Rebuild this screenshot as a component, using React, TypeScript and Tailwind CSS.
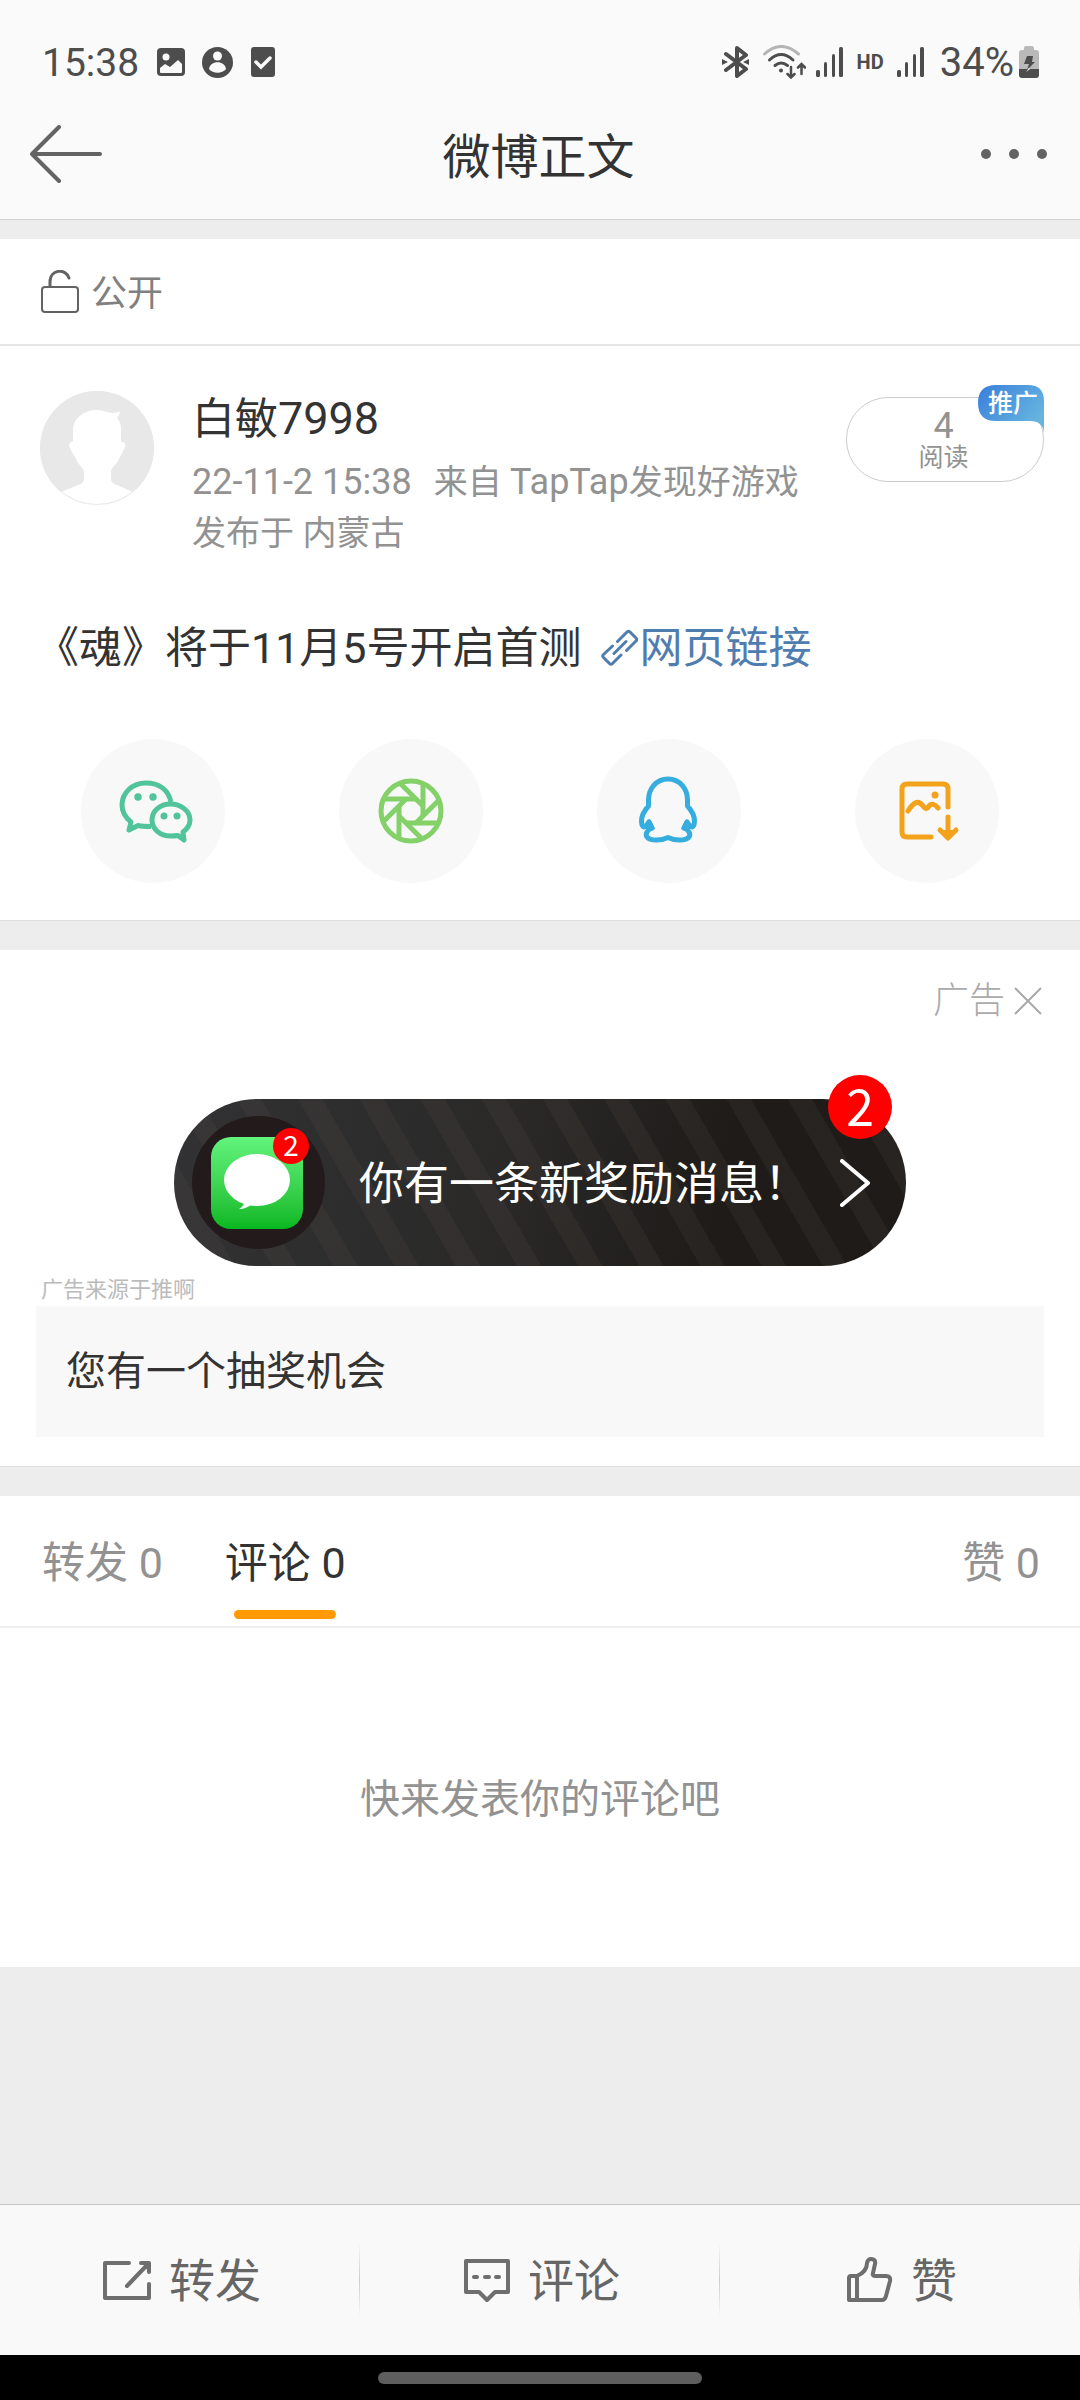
import type { ReactNode } from "react";

function StatusBar() {
  return (
    <div className="flex h-[90px] items-center justify-between pt-[34px] pr-[41px] pl-[42px] text-[40px] leading-[48px] text-[#4d4d4d]">
      <div className="flex items-center">
        <span className="mr-[18px] pt-[2px] text-[39px]">15:38</span>
        <svg width="28" height="28" viewBox="0 0 28 28" className="mr-[17px]">
          <rect width="28" height="28" rx="4" fill="#4d4d4d" />
          <circle cx="9" cy="9" r="3.5" fill="#fafafa" />
          <path d="M3 20l5-4 5 3 8-7 4 4v8q0 1-1 1H4q-1 0-1-1z" fill="#fafafa" />
        </svg>
        <svg width="31" height="31" viewBox="0 0 31 31" className="mr-[18px]">
          <circle cx="15.5" cy="15.5" r="15.5" fill="#4d4d4d" />
          <circle cx="15.5" cy="9" r="4.5" fill="#fafafa" />
          <path d="M7 22c1-9 16-9 17 0-4 5-13 5-17 0z" fill="#fafafa" />
        </svg>
        <svg width="24" height="30" viewBox="0 0 24 30">
          <rect width="24" height="30" rx="3" fill="#4d4d4d" />
          <path d="M5 15l5 5 9-9" fill="none" stroke="#fafafa" strokeWidth="3.5" strokeLinecap="round" />
        </svg>
      </div>
      <div className="flex items-center">
        <svg width="27" height="32" viewBox="0 0 27 32" fill="none" stroke="#4d4d4d" strokeWidth="4" className="mr-[14px]">
          <path d="M4 8l20 15-9 7V2l9 7L4 24" strokeLinejoin="round" strokeLinecap="round" />
          <path d="M0 13v6l6-3zM27 13v6l-6-3z" fill="#4d4d4d" stroke="none" />
        </svg>
        <svg width="43" height="34" viewBox="0 0 43 34" fill="none" stroke="#4d4d4d" strokeWidth="3" strokeLinecap="round" className="mr-[10px]">
          <path d="M1.5 9Q18-6 35.5 9" stroke="#b5b5b5" />
          <path d="M6.5 15Q18 4 30 15M12 20.5q6-5 12.5 0" />
          <circle cx="18" cy="25.5" r="2" fill="#4d4d4d" stroke="none" />
          <path d="M28 22v10M24.5 29l3.5 3.5 3.5-3.5M38.5 29V20M35 22.5l3.5-3.5 3.5 3.5" strokeWidth="2.5" />
        </svg>
        <Signal />
        <span className="mr-[13px] ml-[14px] text-[20px] leading-6 font-bold">HD</span>
        <Signal />
        <span className="mr-[5px] ml-[16px] pt-[2px]">34%</span>
        <svg width="20" height="32" viewBox="0 0 20 32">
          <path d="M5 4V2q0-2 2-2h6q2 0 2 2v2h2q3 0 3 3v18H0V7q0-3 3-3z" fill="#b9b9b9" />
          <path d="M0 23h20v6q0 3-3 3H3q-3 0-3-3z" fill="#4d4d4d" />
          <path d="M8 10h6l-1 6h3l-8 8 2-6H5z" fill="#4d4d4d" />
          <path d="M7 26l4-3-1-1z" fill="#fafafa" />
        </svg>
      </div>
    </div>
  );
}

function Signal() {
  return (
    <svg width="27" height="30" viewBox="0 0 27 30" fill="#4d4d4d">
      <rect x="0" y="23" width="4" height="7" rx="1.5" />
      <rect x="8" y="15" width="3" height="15" rx="1.5" />
      <rect x="16" y="7" width="3" height="23" rx="1.5" />
      <rect x="23" y="0" width="4" height="30" rx="1.5" />
    </svg>
  );
}

function NavBar() {
  return (
    <nav className="grid h-[129px] grid-cols-[1fr_auto_1fr] items-center pr-[33px] pb-[2px] pl-[30px]">
      <button aria-label="返回" className="justify-self-start">
        <svg width="72" height="58" viewBox="0 0 72 58" fill="none" stroke="#636363" strokeWidth="4" strokeLinecap="round" strokeLinejoin="round">
          <path d="M70 29H2M29 2L2 29l27 27" />
        </svg>
      </button>
      <h1 className="pt-[8px] text-[48px] leading-[60px] text-[#333]">微博正文</h1>
      <button aria-label="更多" className="flex gap-[18px] justify-self-end">
        <i className="size-[10px] rounded-full bg-[#636363]" />
        <i className="size-[10px] rounded-full bg-[#636363]" />
        <i className="size-[10px] rounded-full bg-[#636363]" />
      </button>
    </nav>
  );
}

function Avatar() {
  return (
    <svg width="114" height="114" viewBox="0 0 114 114" className="shrink-0">
      <circle cx="57" cy="57" r="57" fill="#e8e8e8" />
      <path
        d="M33 50V38C34 27 43 19 58 19c6 0 9 3 15 3l7-1c0 2-2 4-3 6 3 3 4 7 4 11v13c4 0 5 2 4 5-2 6-5 9-7 14-3 5-7 7-7 11v6c0 4 2 6 6 7l16 7a56 56 0 0 1-72 0l17-7c4-1 6-3 6-7v-6c0-3-4-6-7-11-3-6-6-10-8-15 0-3 1-4 4-5z"
        fill="#fff"
      />
      <circle cx="57" cy="57" r="56.5" fill="none" stroke="#e8e8e8" />
    </svg>
  );
}

function Post() {
  return (
    <article className="border-b border-[#dedede] bg-white pt-[45px] pb-[37px]">
      <div className="flex items-start pr-[36px] pl-[40px]">
        <Avatar />
        <div className="ml-[38px] min-w-0 flex-1">
          <h2 className="text-[43px] leading-[56px] text-[#333]">
            白敏<span className="text-[45px]">7998</span>
          </h2>
          <p className="mt-[10px] text-[34px] leading-[51px] text-[#929292]">
            <span className="text-[36px]">22-11-2 15:38</span>
            <span className="ml-[22px]">
              来自 <span className="text-[36px]">TapTap</span>发现好游戏
            </span>
            <br />
            发布于 内蒙古
          </p>
        </div>
        <div className="relative mt-[6px] flex h-[85px] w-[198px] shrink-0 flex-col items-center rounded-[42px] border border-[#ccc] pt-[10px] pr-[3px] text-[#929292]">
          <span className="text-[36px] leading-[36px]">4</span>
          <span className="text-[25px] leading-[28px]">阅读</span>
          <div className="absolute -top-[13px] -right-px h-[48px] w-[66px]">
            <svg width="66" height="48" viewBox="0 0 66 48" className="absolute inset-0">
              <defs>
                <linearGradient id="promo" x1="0" x2="1" y1="0" y2="0.6">
                  <stop offset="0" stopColor="#3a7edb" />
                  <stop offset="1" stopColor="#66b5df" />
                </linearGradient>
              </defs>
              <path d="M18 0h32q16 0 16 16v32q-1-12-14-12H18Q0 36 0 18T18 0z" fill="url(#promo)" />
            </svg>
            <span className="relative block pl-[10px] text-[25px] leading-[38px] font-medium whitespace-nowrap text-white">推广</span>
          </div>
        </div>
      </div>
      <p className="mt-[59px] px-[36px] text-[43px] leading-[60px] text-[#333]">
        《魂》将于11月5号开启首测
        <a href="#" className="ml-[19px] text-[#507daf]">
          <svg width="37" height="37" viewBox="0 0 37 37" fill="none" stroke="#507daf" strokeWidth="3" strokeLinecap="round" strokeLinejoin="round" className="mr-[2px] inline-block align-[-3px]">
            <path d="M16.5 12.5L26 3q1.5-1.5 3 0l6 6q1.5 1.5 0 3l-9.5 9.5M11.5 17L2.5 25.5q-1.5 1.5 0 3L8.5 34.5q1.5 1.5 3 0L20 26M13 24.5L25 12.5" />
          </svg>
          网页链接
        </a>
      </p>
      <div className="mt-[61px] grid grid-cols-4 px-[24px]">
        <Share label="微信">
          <svg width="74" height="63" viewBox="-3 0 74 63" fill="none" stroke="#52c49b" strokeWidth="5" strokeLinejoin="round" className="overflow-visible">
            <path d="M52 22C49 9 39 3 27 3 13 3 3 13 3 25c0 7 4 13 9 17l-2 8 9-4.5c4 1 8 1 13 1" />
            <path d="M51.5 24C41 24 33 31 33 40s8 16 18.5 16c3 0 5 0 7.5-.5l6 4.5-1-8c4-3 7-7 7-12 0-9-9-16-19.5-16z" />
            <g fill="#52c49b" stroke="none">
              <circle cx="19" cy="17" r="3.7" />
              <circle cx="34" cy="17" r="3.7" />
              <circle cx="45" cy="36" r="3.5" />
              <circle cx="58" cy="36" r="3.5" />
            </g>
          </svg>
        </Share>
        <Share label="朋友圈">
          <svg width="66" height="66" viewBox="-33 -33 66 66" fill="none" stroke="#83d168" strokeWidth="5">
            <circle r="30" />
            {[0, 45, 90, 135, 180, 225, 270, 315].map((deg) => (
              <path key={deg} d="M-27-12H5" transform={`rotate(${deg})`} />
            ))}
          </svg>
        </Share>
        <Share label="QQ">
          <svg width="58" height="65" viewBox="1 1 58 65" fill="none" stroke="#35addf" strokeWidth="5" strokeLinejoin="round" className="overflow-visible">
            <path d="M29 1C17 1 9.5 11 9.5 22v6C5 33 2.5 38 2.5 43c0 6 3 7 4.5 5l3-4 3 6c-5 2-7 6-5 9 3 4 14 4 21 .5 7 3.5 18 3.5 21-.5 2-3 0-7-5-9l3-6 3 4c1.5 2 4.5 1 4.5-5 0-5-2.5-10-7-15v-6C48.500 11 41 1 29 1z" />
            <path d="M10 44l3 6-4-2zM48 44l-3 6 4-2z" />
          </svg>
        </Share>
        <Share label="保存图片">
          <svg width="60" height="60" viewBox="-2 0 60 60" fill="none" stroke="#f3a21b" strokeWidth="5" strokeLinecap="round" strokeLinejoin="round" className="overflow-visible">
            <path d="M49 26V8q0-5-5-5H8Q3 3 3 8v43q0 5 5 5h24" />
            <path d="M9 30c5-8 10-12 15-5 3 4 4 3 6 0s6-2 9 2M49 36v20" />
            <path d="M41 49l8 8 8-8" />
            <path d="M44 50l5 5 5-5z" fill="#f3a21b" strokeWidth="2" />
            <circle cx="36" cy="14" r="3.5" fill="#f3a21b" stroke="none" />
          </svg>
        </Share>
      </div>
    </article>
  );
}

function Share({ label, children }: { label: string; children: ReactNode }) {
  return (
    <button aria-label={label} className="flex size-[144px] items-center justify-center justify-self-center rounded-full bg-[#f8f8f8]">
      {children}
    </button>
  );
}

function Ad() {
  return (
    <section className="mt-[29px] border-b border-[#dedede] bg-white px-[36px] pt-[30px] pb-[29px]">
      <div className="flex h-[42px] items-center justify-end gap-[9px]">
        <span className="text-[36px] leading-[42px] font-light text-[#aaa]">广告</span>
        <button aria-label="关闭广告" className="mr-[2px]">
          <svg width="28" height="28" viewBox="0 0 28 28" stroke="#aaa" strokeWidth="2">
            <path d="M1 1l26 26M27 1L1 27" />
          </svg>
        </button>
      </div>
      <a
        href="#"
        className="relative mx-auto mt-[77px] flex h-[167px] w-[732px] max-w-full items-center rounded-full bg-[repeating-linear-gradient(60deg,transparent_0_32px,rgba(90,80,74,0.16)_32px_53px),linear-gradient(100deg,#323234,#2a2928_45%,#1e1b18_75%)] pr-[36px] pl-[18px]">
        <span className="flex size-[133px] items-center justify-center rounded-full bg-[#231a1c] pr-[3px]">
          <span className="relative flex size-[92px] items-center justify-center rounded-[20px] bg-linear-to-b from-[#62f47c] to-[#04b81f]">
            <svg width="66" height="58" viewBox="0 0 66 58" fill="#fff">
              <ellipse cx="33" cy="26" rx="33" ry="26" />
              <path d="M20 46q1 6-5 9 8 0 14-6z" />
            </svg>
            <span className="absolute -top-[9px] -right-[6px] size-[36px] rounded-full bg-[#fe0000] text-center font-['Noto_Sans_CJK_SC'] text-[28px] leading-[33px] text-white">2</span>
          </span>
        </span>
        <span className="ml-[34px] flex-1 pt-[4px] text-[45px] leading-[56px] whitespace-nowrap text-white">你有一条新奖励消息！</span>
        <svg width="30" height="48" viewBox="0 0 30 48" fill="none" stroke="#fff" strokeWidth="4" strokeLinecap="round" strokeLinejoin="round">
          <path d="M2 2l26 22L2 46" />
        </svg>
        <span className="absolute -top-[24px] right-[14px] size-[64px] rounded-full bg-[#fe0000] text-center font-['Noto_Sans_CJK_SC'] text-[50px] leading-[58px] text-white">2</span>
      </a>
      <p className="mt-[8px] pl-[5px] text-[22px] leading-[32px] text-[#bbb]">广告来源于推啊</p>
      <p className="bg-[#f8f8f8] px-[30px] text-[40px] leading-[131px] text-[#333]">您有一个抽奖机会</p>
    </section>
  );
}

function Comments() {
  return (
    <section className="mt-[29px] bg-white">
      <div className="flex h-[132px] items-start border-b-2 border-[#f0f0f0] pt-[39px] pr-[40px] pl-[42px] text-[43px] leading-[56px] text-[#929292]">
        <button>转发 0</button>
        <button className="ml-[62px] flex flex-col items-center text-[#333]">
          评论 0
          <i className="mt-[19px] h-[9px] w-[102px] rounded-full bg-[#ff9a05]" />
        </button>
        <button className="ml-auto">赞 0</button>
      </div>
      <p className="pt-[148px] pb-[143px] text-center text-[40px] leading-[48px] text-[#929292]">快来发表你的评论吧</p>
    </section>
  );
}

function ActionBar() {
  return (
    <footer className="grid h-[151px] grid-cols-3 border-t border-[#c8c8c8] bg-[#f9f9f9] text-[46px] leading-[60px] text-[#666]">
      <Action label="转发">
        <svg width="48" height="39" viewBox="0 0 48 39" fill="none" stroke="#6e6e6e" strokeWidth="4" strokeLinecap="round" strokeLinejoin="round">
          <path d="M26 2H2v35h44V23M24 25L45 3M38 2h8v9" />
        </svg>
      </Action>
      <Action label="评论">
        <svg width="46" height="43" viewBox="0 0 46 43" fill="none" stroke="#6e6e6e" strokeWidth="4" strokeLinecap="round" strokeLinejoin="round">
          <path d="M2 2h42v31H31l-8 8-8-8H2zM10 18h3M21 18h4M32 18h3" />
        </svg>
      </Action>
      <Action label="赞">
        <svg width="46" height="46" viewBox="0 0 46 46" fill="none" stroke="#6e6e6e" strokeWidth="4" strokeLinecap="round" strokeLinejoin="round">
          <path d="M10 19C17 16 20 12 20 6q1-4 4-4 5 0 4 5l-2 9q-1 3 2 3h11q5 0 4 5l-4 15q-1 4-4 4H2V21q0-2 2-2h6v24" />
        </svg>
      </Action>
    </footer>
  );
}

function Action({ label, children }: { label: string; children: ReactNode }) {
  return (
    <div className="flex items-center">
      <button className="flex flex-1 items-center justify-center gap-[18px] pl-[5px]">
        {children}
        <span className="pt-[2px]">{label}</span>
      </button>
      <i className="h-[74px] w-px bg-linear-to-b from-transparent via-[#ccc] to-transparent" />
    </div>
  );
}

export default function App() {
  return (
    <div className="flex min-h-screen flex-col bg-[#ededed] [font-family:Roboto,'Noto_Sans_CJK_SC',sans-serif]">
      <header className="border-b border-[#d0d0d0] bg-[#fafafa]">
        <StatusBar />
        <NavBar />
      </header>
      <div className="mt-[19px] flex h-[107px] items-center border-b-2 border-[#e6e6e6] bg-white pl-[41px] text-[36px] leading-[44px] text-[#808080]">
        <svg width="38" height="43" viewBox="0 0 38 43" fill="none" stroke="#636363" strokeWidth="2" strokeLinecap="round" className="mr-[12px]">
          <rect x="1" y="17" width="36" height="25" rx="3" />
          <path d="M9 16v-4c0-13 16-14 19-4" strokeWidth="3" />
        </svg>
        <span className="pt-[4px]">公开</span>
      </div>
      <Post />
      <Ad />
      <Comments />
      <div className="flex-1" />
      <ActionBar />
      <div className="flex h-[45px] items-center justify-center bg-black">
        <i className="h-[12px] w-[324px] rounded-full bg-[#5e5e5e]" />
      </div>
    </div>
  );
}
